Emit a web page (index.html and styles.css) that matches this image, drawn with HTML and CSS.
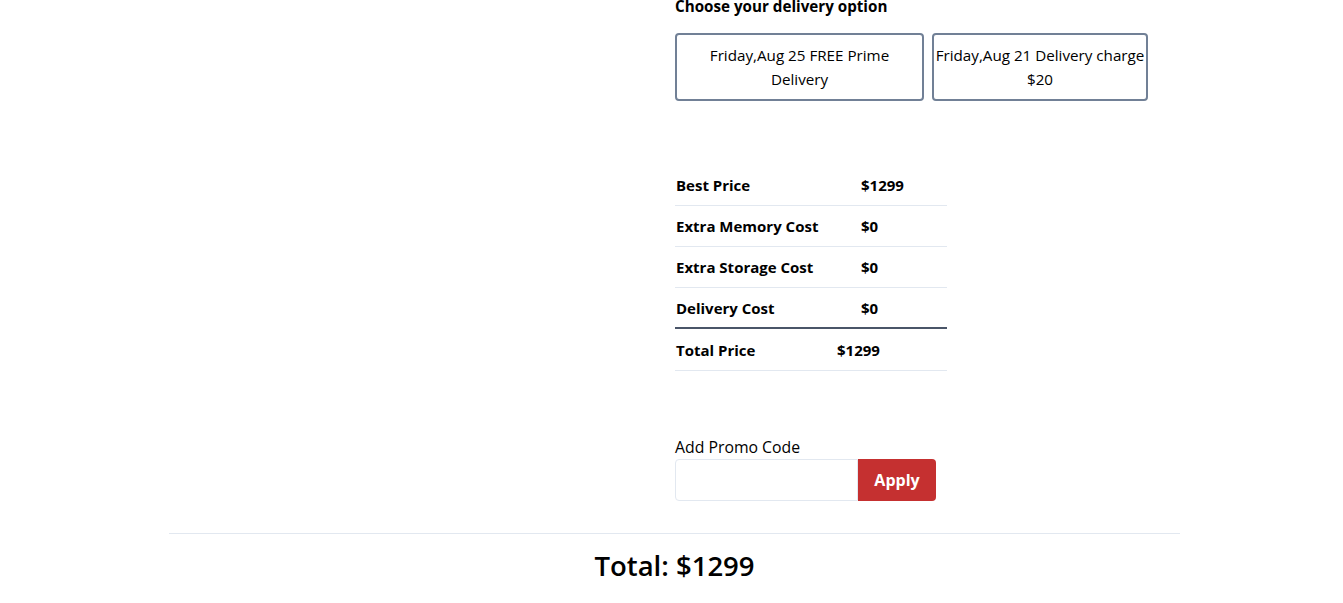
FILE: index.html
```html
<!DOCTYPE html>
<html>
<head>
<meta charset="utf-8">
<link rel="stylesheet" href="styles.css">
</head>
<body>
<div class="page">
  <div class="row">
    <div class="left"></div>
    <div class="right">
      <h3 class="heading">Choose your delivery option</h3>
      <div class="options">
        <button class="option opt-a">Friday,Aug 25 FREE Prime Delivery</button>
        <button class="option opt-b">Friday,Aug 21 Delivery charge $20</button>
      </div>
      <table class="prices">
        <tr><td class="label">Best Price</td><td class="val">$1299</td></tr>
        <tr><td class="label">Extra Memory Cost</td><td class="val">$0</td></tr>
        <tr><td class="label">Extra Storage Cost</td><td class="val">$0</td></tr>
        <tr class="last"><td class="label">Delivery Cost</td><td class="val">$0</td></tr>
      </table>
      <div class="total-row"><span class="t-label">Total Price</span><span class="t-val">$1299</span></div>
      <div class="promo">
        <label class="promo-label">Add Promo Code</label>
        <div class="promo-group">
          <input class="promo-input" type="text">
          <button class="apply">Apply</button>
        </div>
      </div>
    </div>
  </div>
  <hr class="divider">
  <h2 class="grand">Total: $1299</h2>
</div>
</body>
</html>
```
FILE: styles.css
```css
* { box-sizing: border-box; }
body {
  margin: 0;
  font-family: "Open Sans", "Noto Sans", sans-serif;
  color: #000;
  background: #fff;
}
.page {
  width: 1011px;
  margin-left: 169px;
}
.row { display: flex; }
.left { width: 506px; flex: none; }
.right { flex: 1; }
.heading {
  margin: -4px 0 0 0;
  font-size: 15.2px;
  line-height: 20px;
  font-weight: 700;
}
.options {
  display: flex;
  gap: 8px;
  margin-top: 17px;
}
.option {
  height: 68px;
  border: 2px solid #718096;
  border-radius: 4px;
  background: #fff;
  font-family: inherit;
  font-size: 15.2px;
  line-height: 24px;
  color: #000;
  padding: 0;
  text-align: center;
}
.opt-a { width: 249px; padding: 0 28px; }
.opt-b { width: 216px; }
.prices {
  margin-top: 63px;
  border-collapse: collapse;
  width: 272px;
}
.prices td {
  height: 41px;
  padding: 1px 0 0 0;
  font-size: 15px;
  font-weight: 700;
  border-bottom: 1px solid #e2e8f0;
  vertical-align: middle;
}
.prices .label { width: 186px; padding-left: 1px; }
.prices tr.last td { border-bottom: 2px solid #4a5568; }
.total-row {
  width: 272px;
  height: 42px;
  display: flex;
  align-items: center;
  border-bottom: 1px solid #e2e8f0;
  font-size: 15px;
  font-weight: 700;
}
.t-label { width: 162px; padding-left: 1px; }
.promo { margin-top: 64px; }
.promo-label {
  display: block;
  font-size: 15.8px;
  line-height: 24px;
}
.promo-group { display: flex; }
.promo-input {
  width: 183px;
  height: 42px;
  border: 1px solid #e2e8f0;
  border-radius: 4px 0 0 4px;
  margin: 0;
}
.apply {
  width: 78px;
  height: 42px;
  background: #c53030;
  color: #fff;
  border: none;
  border-radius: 0 4px 4px 0;
  font-family: inherit;
  font-weight: 700;
  font-size: 16px;
}
.divider {
  margin: 32px 0 0 0;
  border: none;
  border-top: 1px solid #e2e8f0;
}
.grand {
  margin: 14px 0 0 0;
  text-align: center;
  font-size: 27.5px;
  line-height: 36px;
  font-weight: 600;
}
```
